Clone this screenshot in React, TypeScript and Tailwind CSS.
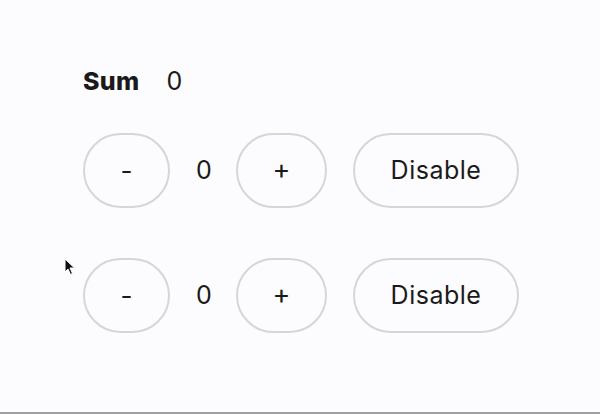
import React, { useState } from "react";

function Counter() {
  const [n, setN] = useState(0);
  return (
    <div className="flex items-center gap-[26px]">
      <button
        onClick={() => setN(n - 1)}
        className="w-[87px] h-[75px] rounded-full border-2 border-[#d6d6d6] bg-transparent text-[26px] text-[#1a1a1a] flex items-center justify-center"
      >
        -
      </button>
      <span className="w-[14px] text-center text-[25px] text-[#1a1a1a]">{n}</span>
      <button
        onClick={() => setN(n + 1)}
        className="w-[91px] h-[75px] rounded-full border-2 border-[#d6d6d6] bg-transparent text-[27px] text-[#1a1a1a] flex items-center justify-center"
      >
        +
      </button>
      <button className="w-[166px] h-[75px] rounded-full border-2 border-[#d6d6d6] bg-transparent text-[25px] tracking-[0.5px] text-[#1a1a1a] flex items-center justify-center">
        Disable
      </button>
    </div>
  );
}

export default function App() {
  return (
    <div
      className="relative w-[600px] h-[414px] bg-[#fcfbfd] border-b-2 border-[#a0a0a0] overflow-hidden"
      style={{ fontFamily: "Inter, 'Open Sans', sans-serif" }}
    >
      <div className="pl-[83px] pt-[66px] flex flex-col">
        <div className="flex items-center gap-[27px] h-[32px] text-[25px] text-[#1a1a1a]">
          <span className="font-extrabold tracking-[0.3px]">Sum</span>
          <span>0</span>
        </div>
        <div className="mt-[35px]">
          <Counter />
        </div>
        <div className="mt-[50px]">
          <Counter />
        </div>
      </div>
      <svg className="absolute left-[64px] top-[258px]" width="12" height="18" viewBox="0 0 12 18">
        <path d="M1 1 L1 14 L4 11 L6.5 16.5 L8.5 15.5 L6 10 L10.5 10 Z" fill="#111" stroke="#fff" strokeWidth="1" />
      </svg>
    </div>
  );
}
